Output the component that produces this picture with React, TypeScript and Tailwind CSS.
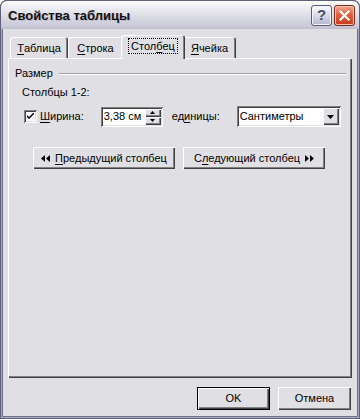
import React from "react";

const raised =
  "shadow-[inset_1px_1px_0_#ffffff,inset_-1px_-1px_0_#404040,inset_-2px_-2px_0_#808080]";
const sunken =
  "shadow-[inset_1px_1px_0_#808080,inset_-1px_-1px_0_#ffffff,inset_2px_2px_0_#404040,inset_-2px_-2px_0_#e0dfe3]";

function U({ children }: { children: React.ReactNode }) {
  return <span className="underline underline-offset-[2px] decoration-1">{children}</span>;
}

function Tab({
  w,
  selected,
  children,
}: {
  w: string;
  selected?: boolean;
  children: React.ReactNode;
}) {
  if (selected) {
    return (
      <div
        className={`relative z-10 -mx-[2px] -mb-px h-[24px] ${w} rounded-t-[3px] bg-[#e0dfe3] shadow-[inset_1px_1px_0_#ffffff,inset_-1px_0_0_#404040,inset_-2px_0_0_#808080] flex items-start justify-center pt-[4px]`}
      >
        <span className="outline-1 outline-dotted outline-black px-[2px] leading-[14px]">
          {children}
        </span>
      </div>
    );
  }
  return (
    <div
      className={`h-[21px] ${w} rounded-t-[3px] bg-[#e0dfe3] shadow-[inset_1px_1px_0_#ffffff,inset_-1px_0_0_#404040,inset_-2px_0_0_#808080] flex items-start justify-center pt-[4px] leading-[14px]`}
    >
      {children}
    </div>
  );
}

function Btn({
  className = "",
  children,
}: {
  className?: string;
  children: React.ReactNode;
}) {
  return (
    <div
      className={`bg-[#e0dfe3] ${raised} flex items-center justify-center ${className}`}
    >
      {children}
    </div>
  );
}

export default function App() {
  return (
    <div
      className="w-[360px] h-[419px] flex flex-col bg-[#e0dfe3] rounded-t-[7px] overflow-hidden shadow-[inset_0_0_0_1px_#5f607a,inset_0_0_0_2px_#a8a9bf,inset_0_0_0_3px_#6e6f89] text-[11px] text-black"
      style={{ fontFamily: '"Liberation Sans", Arial, sans-serif' }}
    >
      {/* Title bar */}
      <div className="h-[29px] shrink-0 flex items-center pl-[7px] pr-[4px] rounded-t-[7px] border border-b-0 border-[#5f607a] bg-[linear-gradient(to_bottom,#ffffff_0%,#eeeef3_20%,#dcdce6_55%,#c9c9d8_90%,#bcbccc_100%)]">
        <div className="flex-1 font-bold text-[13px] text-[#111] [text-shadow:1px_1px_0_#b8b8c8] pt-px">
          Свойства таблицы
        </div>
        <div className="flex gap-[2px] items-center">
          <div className="w-[21px] h-[21px] rounded-[3px] border border-[#5a5c78] bg-[linear-gradient(to_bottom,#fbfbfe,#dcdcea_45%,#b4b6cf)] flex items-center justify-center text-[15px] font-bold text-[#4a4c66] shadow-[inset_0_0_0_1px_#f4f4fa]">
            ?
          </div>
          <div className="w-[21px] h-[21px] rounded-[3px] border border-[#7a2a1a] bg-[linear-gradient(to_bottom,#f6a88e,#e5603f_45%,#c53a1d)] flex items-center justify-center shadow-[inset_0_0_0_1px_#f8c4b4]">
            <svg width="11" height="11" viewBox="0 0 11 11">
              <path d="M1.5 1.5 L9.5 9.5 M9.5 1.5 L1.5 9.5" stroke="#ffffff" strokeWidth="2.2" strokeLinecap="square" />
            </svg>
          </div>
        </div>
      </div>

      {/* Body */}
      <div className="flex-1 flex flex-col px-[8px] pt-[6px] pb-[8px]">
        {/* Tabs */}
        <div className="flex items-end h-[23px] pl-[2px]">
          <Tab w="w-[58px]">
            <U>Т</U>аблица
          </Tab>
          <Tab w="w-[55px]">
            <U>С</U>трока
          </Tab>
          <Tab w="w-[64px]" selected>
            Стол<U>б</U>ец
          </Tab>
          <Tab w="w-[53px]">
            <U>Я</U>чейка
          </Tab>
        </div>

        {/* Panel */}
        <div className={`h-[320px] bg-[#e0dfe3] ${raised} flex flex-col`}>
          <div className="flex items-center pl-[7px] pr-[6px] mt-[9px] h-[13px] gap-[6px]">
            <span>Размер</span>
            <div className="flex-1 h-[2px] border-t border-[#a0a0a0] border-b border-b-white" />
          </div>
          <div className="ml-[14px] mt-[6px] h-[13px] leading-[13px]">Столбцы 1-2:</div>
          <div className="flex items-center mt-[7px] h-[21px]">
            <div className={`ml-[16px] w-[13px] h-[13px] bg-white ${sunken} flex items-center justify-center`}>
              <svg width="7" height="7" viewBox="0 0 7 7">
                <path d="M0 2 L0 4 L2 6 L7 1 L7 -1 L2 4 Z" fill="#000" />
              </svg>
            </div>
            <span className="ml-[3px]">
              <U>Ш</U>ирина:
            </span>
            <div className={`ml-[17px] w-[62px] h-[20px] bg-white ${sunken} flex items-center pl-[3px] pr-[2px]`}>
              <span className="flex-1">3,38 см</span>
              <div className="flex flex-col w-[16px] h-[16px]">
                <div className={`h-[8px] bg-[#e0dfe3] ${raised} flex items-center justify-center`}>
                  <svg width="5" height="3" viewBox="0 0 5 3">
                    <path d="M0 3 L5 3 L2.5 0 Z" fill="#000" />
                  </svg>
                </div>
                <div className={`h-[8px] bg-[#e0dfe3] ${raised} flex items-center justify-center`}>
                  <svg width="5" height="3" viewBox="0 0 5 3">
                    <path d="M0 0 L5 0 L2.5 3 Z" fill="#000" />
                  </svg>
                </div>
              </div>
            </div>
            <span className="ml-[9px]">
              ед<U>и</U>ницы:
            </span>
            <div className={`ml-[17px] w-[104px] h-[21px] bg-white ${sunken} flex items-center pl-[3px] pr-[2px]`}>
              <span className="flex-1">Сантиметры</span>
              <div className={`w-[16px] h-[17px] bg-[#e0dfe3] ${raised} flex items-center justify-center`}>
                <svg width="7" height="4" viewBox="0 0 7 4">
                  <path d="M0 0 L7 0 L3.5 4 Z" fill="#000" />
                </svg>
              </div>
            </div>
          </div>
          <div className="flex mt-[20px] ml-[25px] gap-[8px]">
            <Btn className="w-[142px] h-[22px] gap-[5px]">
              <svg width="9" height="7" viewBox="0 0 9 7">
                <path d="M0 3.5 L4 0 L4 7 Z M5 3.5 L9 0 L9 7 Z" fill="#000" />
              </svg>
              <span>
                <U>П</U>редыдущий столбец
              </span>
            </Btn>
            <Btn className="w-[142px] h-[22px] gap-[5px]">
              <span>
                С<U>л</U>едующий столбец
              </span>
              <svg width="9" height="7" viewBox="0 0 9 7">
                <path d="M0 0 L4 3.5 L0 7 Z M5 0 L9 3.5 L5 7 Z" fill="#000" />
              </svg>
            </Btn>
          </div>
        </div>

        {/* Bottom buttons */}
        <div className="flex justify-end gap-[8px] mt-[9px] pr-[1px]">
          <div className="w-[73px] h-[23px] border border-black">
            <Btn className="w-full h-full">OK</Btn>
          </div>
          <Btn className="w-[73px] h-[23px]">Отмена</Btn>
        </div>
      </div>
    </div>
  );
}
